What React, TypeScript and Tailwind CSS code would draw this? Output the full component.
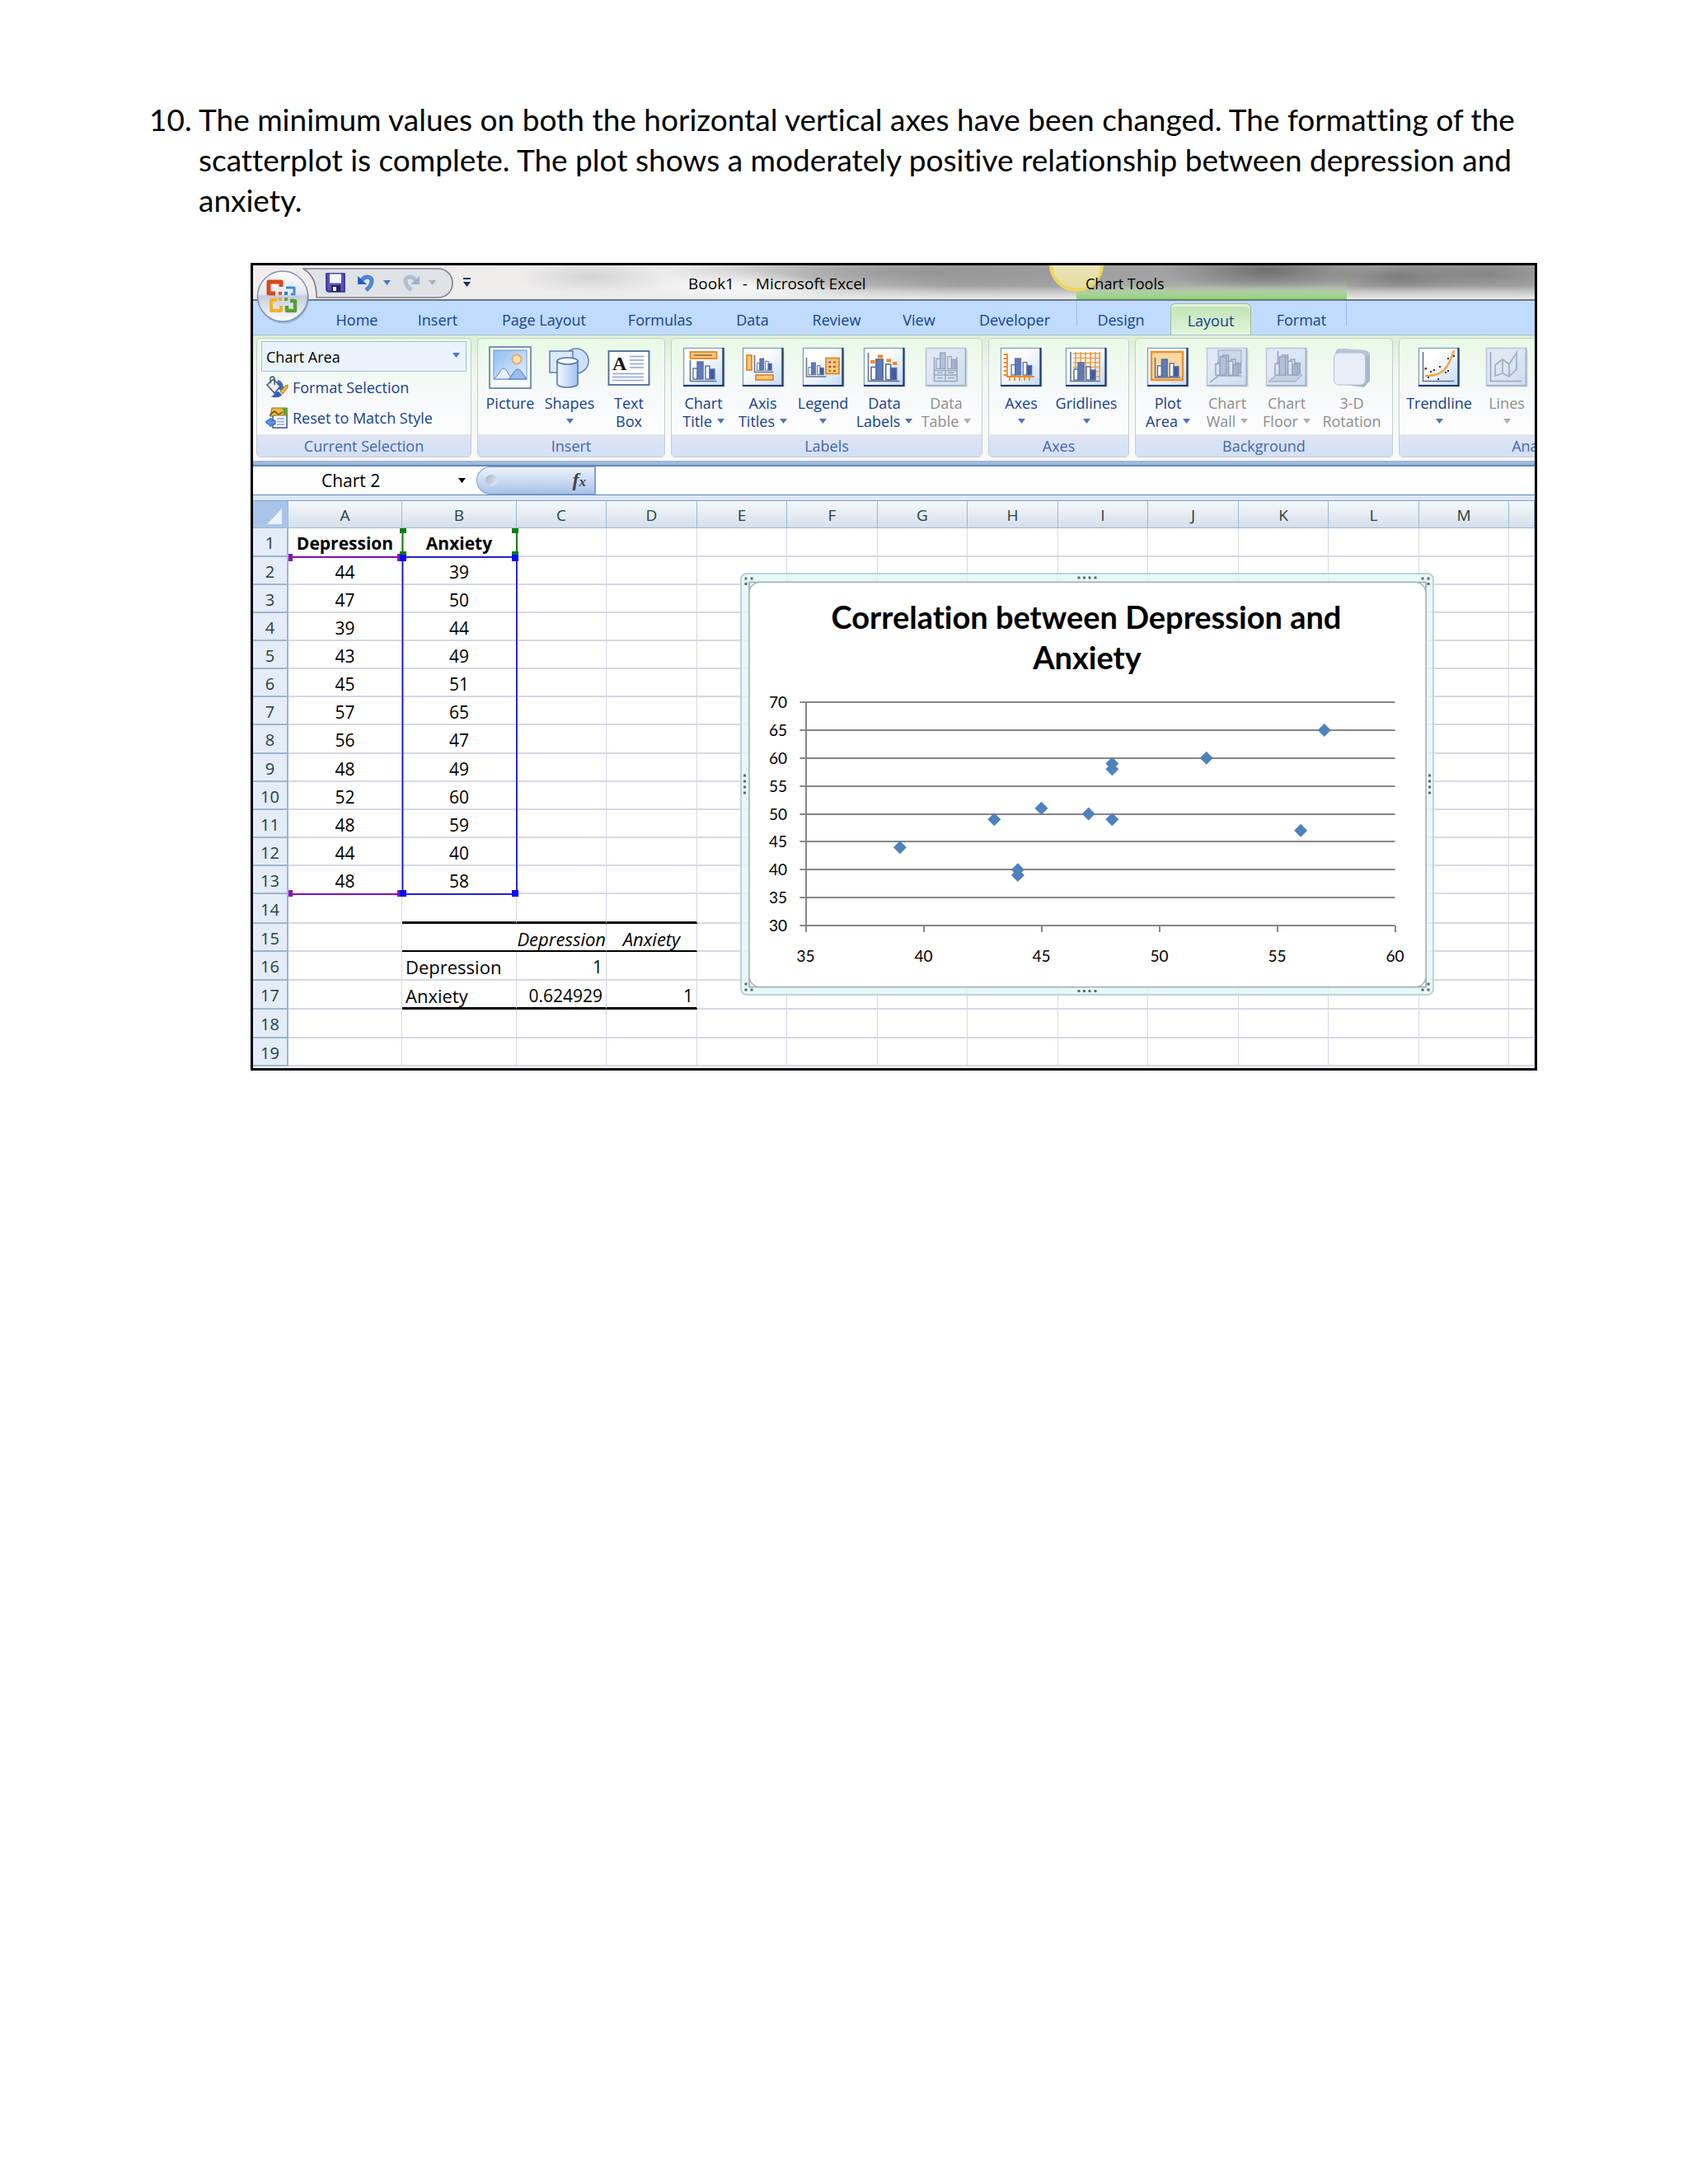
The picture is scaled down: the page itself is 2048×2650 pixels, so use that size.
import React from "react";

const navy = "text-[#15428b]";

/* ---------- icons ---------- */

function Bars({ x = 0, y = 0, s = 1, off = false }: { x?: number; y?: number; s?: number; off?: boolean }) {
  const line = off ? "#97a5bf" : "#5b6f9e";
  const fill = off ? "#b4c0d6" : "#5f7abb";
  const dark = off ? "#a8b5cd" : "#3f5aa3";
  return (
    <g transform={`translate(${x} ${y}) scale(${s})`} stroke={line} strokeWidth="1.4">
      <rect x="0" y="8" width="5" height="13" fill={off ? "#dbe3f0" : "#fff"} />
      <rect x="5" y="0" width="7" height="21" fill={fill} />
      <rect x="15" y="5" width="5" height="16" fill={off ? "#dbe3f0" : "#fff"} />
      <rect x="20" y="9" width="6" height="12" fill={dark} />
    </g>
  );
}

function Tile({ off = false, children }: { off?: boolean; children?: React.ReactNode }) {
  return (
    <svg viewBox="0 0 52 50" className="h-[50px] w-[52px]" aria-hidden="true">
      <defs>
        <linearGradient id={off ? "tileOff" : "tileOn"} x1="0" y1="0" x2="1" y2="1">
          <stop offset="0.35" stopColor={off ? "#dfe8f4" : "#ffffff"} />
          <stop offset="1" stopColor={off ? "#cfdcf0" : "#c3dafa"} />
        </linearGradient>
      </defs>
      <rect x="4" y="4" width="48" height="45" fill="#000" opacity="0.08" />
      <rect x="1.5" y="1.5" width="48" height="45" fill={off ? "url(#tileOff)" : "url(#tileOn)"} stroke={off ? "#b9c6dc" : "#8fa3c4"} strokeWidth="1.5" />
      <path d="M49.5 1v46H1" fill="none" stroke={off ? "#9dadc8" : "#1f3a66"} strokeWidth={off ? 1.6 : 2.2} />
      {children}
    </svg>
  );
}

const orange = { fill: "#fbc77a", stroke: "#e08a2a", strokeWidth: 1.8 };

function Axes({ off = false, d = "M9.5 16v25.500h32" }: { off?: boolean; d?: string }) {
  return <path d={d} fill="none" stroke={off ? "#97a5bf" : "#5f7393"} strokeWidth="1.6" />;
}

const ChartTitleIcon = () => (
  <Tile>
    <rect x="9.500" y="6" width="32" height="8" {...orange} />
    <path d="M14 10h22" stroke="#8a6a3a" strokeWidth="1.4" />
    <Axes />
    <Bars x={13} y={18} />
  </Tile>
);
const AxisTitlesIcon = () => (
  <Tile>
    <rect x="6" y="10" width="6" height="18" {...orange} />
    <rect x="17" y="34" width="21" height="6" {...orange} />
    <Axes d="M15.500 10v20.500h23" />
    <Bars x={18.5} y={14} s={0.68} />
  </Tile>
);
const LegendIcon = () => (
  <Tile>
    <Axes d="M5.500 13v23h24" />
    <Bars x={8} y={19} s={0.7} />
    <rect x="29" y="13.500" width="16" height="19" {...orange} />
    <g strokeWidth="2.200">
      <path d="M32.500 18.500h2.500" stroke="#2b3fae" />
      <path d="M32.500 24h2.500" stroke="#c22" />
      <path d="M32.500 29h2.500" stroke="#6a8a2a" />
      <path d="M38 18.500h3M38 24h3M38 29h3" stroke="#8a6a3a" />
    </g>
  </Tile>
);
const DataLabelsIcon = () => (
  <Tile>
    <Axes d="M6.500 7v34.500h38" />
    <Bars x={10} y={15} s={1.18} />
    <g fill="#f08a24">
      <rect x="9" y="16" width="5.500" height="4" />
      <rect x="18" y="9.500" width="6" height="4" />
      <rect x="28.500" y="14.500" width="5.500" height="4" />
      <rect x="36" y="18" width="5.500" height="4" />
    </g>
  </Tile>
);
const DataTableIcon = () => (
  <Tile off>
    <Axes off d="M11.500 12v29.500h27.500V12" />
    <Bars off x={14} y={7} s={0.92} />
    <path d="M12 28.500h27M12 34h27M25 28.500v13M15 31.300h7M28 31.300h8M15 37.500h7M28 37.500h8" stroke="#97a5bf" strokeWidth="1.400" />
  </Tile>
);
const AxesIcon = () => (
  <Tile>
    <path d="M9 8v28h33M4.500 9H9M4.500 14H9M4.500 19H9M4.500 24H9M4.500 29H9M4.500 34H9M12 36v5M18 36v5M24 36v5M30 36v5M36 36v5" stroke="#ee8a22" strokeWidth="1.800" fill="none" />
    <Bars x={14} y={14} s={0.95} />
  </Tile>
);
const GridlinesIcon = () => (
  <Tile>
    <path d="M10 8h33M10 13.500h33M10 19h33M10 24.500h33M10 30h33M10 36h33M13 6v34M19 6v34M25 6v34M31 6v34M37 6v34M42 6v34" stroke="#f0a04a" strokeWidth="1.700" />
    <Axes d="M7 6v35.500h36" />
    <Bars x={11} y={19} />
  </Tile>
);
const PlotAreaIcon = () => (
  <Tile>
    <rect x="6" y="6" width="38" height="34" fill="#fcd9a4" stroke="#ea9330" strokeWidth="2.500" />
    <Axes d="M10.500 13v24h31" />
    <Bars x={13.500} y={15} s={0.98} />
  </Tile>
);
const ChartWallIcon = () => (
  <Tile off>
    <rect x="15" y="4" width="28" height="20" fill="#ccd7e7" stroke="#97a5bf" />
    <Axes off d="M15 24v11l-10 8M15 35h28" />
    <Bars off x={15} y={10} s={1.05} />
    <Bars off x={12} y={12} s={1.05} />
  </Tile>
);
const ChartFloorIcon = () => (
  <Tile off>
    <Axes off d="M15.500 5v28" />
    <path d="M4 42l9-8h32l-8 8z" fill="#c4cfe1" stroke="#97a5bf" />
    <Bars off x={15} y={10} s={1.05} />
    <Bars off x={12} y={12} s={1.05} />
  </Tile>
);
const RotationIcon = () => (
  <svg viewBox="0 0 52 50" className="h-[50px] w-[52px]" aria-hidden="true">
    <path d="M6 8q1-6 6-6l30 2q5 1 6 6v31l-7 8-30-4z" fill="#a9b6cc" />
    <path d="M6 8q1-6 6-6l30 2q5 1 6 6l-6 1z" fill="#b8c4d8" />
    <rect x="4.500" y="7" width="38" height="39" rx="6" fill="#e9edf7" stroke="#b4c0d6" />
  </svg>
);
const TrendlineIcon = () => (
  <Tile>
    <Axes d="M6.500 6v35.500h38" />
    <path d="M9 35c14 0 22-3 28-14 3-5 5-10 7-17" fill="none" stroke="#f5a63c" strokeWidth="2.600" />
    <g fill="#27305a">
      <rect x="8.500" y="25" width="2.500" height="2.500" fill="#a12" />
      <rect x="15" y="29" width="2" height="2" />
      <rect x="19" y="27" width="2" height="2" />
      <rect x="26" y="23" width="2" height="2" />
      <rect x="12" y="36" width="2" height="2" />
      <rect x="24" y="38" width="2" height="2" />
      <rect x="33" y="30" width="2" height="2" />
      <rect x="36" y="28" width="2" height="2" />
      <rect x="36" y="13" width="2" height="2" />
      <rect x="43" y="10" width="2" height="2" />
    </g>
  </Tile>
);
const LinesIcon = () => (
  <Tile off>
    <Axes off d="M6.500 6v35.500h38" />
    <path d="M12 35V22l9-7 8 6 9-14v20l-9 9-8-4zM21 15v17M29 21v15" fill="none" stroke="#a3b0c8" strokeWidth="1.800" />
  </Tile>
);
const PictureIcon = () => (
  <svg viewBox="0 0 52 52" className="h-[52px] w-[52px]" aria-hidden="true">
    <defs>
      <linearGradient id="sky" x1="0" y1="0" x2="1" y2="1">
        <stop offset="0" stopColor="#8ebdf2" />
        <stop offset="1" stopColor="#e4f3fd" />
      </linearGradient>
    </defs>
    <rect x="1" y="1" width="50" height="50" fill="#f4fafe" stroke="#5f7a9c" strokeWidth="1.600" />
    <rect x="6" y="5" width="40" height="35" fill="url(#sky)" stroke="#6c96cc" />
    <circle cx="34" cy="16" r="5.500" fill="#ffe3b0" stroke="#f2a66a" strokeWidth="2" />
    <path d="M6 40c6-4 8-13 12-13s6 9 11 13z" fill="#e8effc" stroke="#5c7fbe" />
    <path d="M24 40c4-3 7-12 11-12s7 7 11 12z" fill="#9dbcec" stroke="#4f74b6" />
  </svg>
);
const ShapesIcon = () => (
  <svg viewBox="0 0 52 52" className="h-[52px] w-[52px]" aria-hidden="true">
    <defs>
      <linearGradient id="cyl" x1="0" y1="0" x2="1" y2="0">
        <stop offset="0" stopColor="#f2f8ff" />
        <stop offset="1" stopColor="#9fc3f2" />
      </linearGradient>
    </defs>
    <circle cx="34" cy="18" r="15" fill="#cde0f8" stroke="#5f83b4" strokeWidth="1.500" />
    <rect x="2" y="6" width="28" height="26" fill="#d9e8fb" stroke="#5f7fa8" strokeWidth="1.500" />
    <path d="M11 18v28c0 2 5 4 12 4s13-2 13-4V18z" fill="url(#cyl)" stroke="#4f719f" strokeWidth="1.500" />
    <ellipse cx="23.500" cy="18" rx="12.500" ry="4" fill="#f6faff" stroke="#4f719f" strokeWidth="1.500" />
  </svg>
);
const TextBoxIcon = () => (
  <svg viewBox="0 0 52 52" className="h-[52px] w-[52px]" aria-hidden="true">
    <rect x="1.500" y="6" width="49" height="41" fill="#fdfeff" stroke="#4c6a92" strokeWidth="1.800" />
    <text x="6" y="29" fontFamily="Liberation Serif, serif" fontWeight="bold" fontSize="24" fill="#111">A</text>
    <path d="M27 12.500h17M27 17h17M27 21.500h17M27 26h17M6 33.500h38M6 37.500h38M6 41.500h38" stroke="#8fa4d2" strokeWidth="1.700" />
  </svg>
);

function Caret({ className = "text-[#4c77b5]" }: { className?: string }) {
  return (
    <svg viewBox="0 0 9 6" className={`inline-block h-[6px] w-[9px] shrink-0 ${className}`} aria-hidden="true">
      <path d="M0 0h9L4.500 6z" fill="currentColor" />
    </svg>
  );
}

const OfficeOrb = () => (
  <svg viewBox="0 0 66 66" className="h-[66px] w-[66px]" aria-hidden="true">
    <defs>
      <linearGradient id="orb" x1="0" y1="0" x2="0" y2="1">
        <stop offset="0" stopColor="#fbfcfe" />
        <stop offset="0.450" stopColor="#e4e8f0" />
        <stop offset="0.500" stopColor="#c3cede" />
        <stop offset="1" stopColor="#ffffff" />
      </linearGradient>
    </defs>
    <circle cx="34" cy="34.500" r="31" fill="#5b6f94" opacity="0.350" />
    <circle cx="33" cy="32.500" r="30.500" fill="url(#orb)" stroke="#8392ad" strokeWidth="1.500" />
    <g fill="none" strokeLinejoin="round">
      <path d="M31 21v-6H16v14h8" stroke="#d9481c" strokeWidth="5" />
      <path d="M37 22h10v8h-4" stroke="#3b8ede" strokeWidth="3" />
      <path d="M26 37h-7v13h12v-6" stroke="#f6b021" strokeWidth="4" />
      <path d="M38 44v6h10V38h-6" stroke="#5c9e31" strokeWidth="4.500" />
    </g>
    <rect x="28" y="27" width="4" height="4" fill="#e2541c" />
    <rect x="35" y="27" width="4" height="4" fill="#2f7fd6" />
    <rect x="28" y="34" width="4" height="4" fill="#f3a81c" />
    <rect x="35" y="34" width="4" height="4" fill="#6aa836" />
  </svg>
);

const SaveIcon = () => (
  <svg viewBox="0 0 24 24" className="h-6 w-6" aria-hidden="true">
    <path d="M1 1h22v22H3l-2-2z" fill="#5a50c0" stroke="#2e2a8a" strokeWidth="1.600" />
    <rect x="5" y="1.500" width="14" height="11" fill="#f4f7ff" />
    <rect x="7" y="15" width="11" height="8" fill="#23264f" />
    <rect x="9" y="17" width="4" height="5" fill="#e3e8f4" />
  </svg>
);
const UndoIcon = ({ redo = false }: { redo?: boolean }) => (
  <svg viewBox="0 0 22 22" className="h-[22px] w-[22px]" aria-hidden="true">
    <g transform={redo ? "translate(22 0) scale(-1 1)" : undefined}>
      <path d="M6 8C9 3 18 2 18 9c0 5-3 8-7 11" fill="none" stroke={redo ? "#b4bfce" : "#4f84d8"} strokeWidth="5" />
      <path d="M1 3v10h11z" fill={redo ? "#a3b0c4" : "#2c5cb8"} />
    </g>
  </svg>
);
const FormatIcon = () => (
  <svg viewBox="0 0 28 28" className="h-7 w-7" aria-hidden="true">
    <path d="M15 5c5 1 8 6 7 14-5 0-8-6-8-9z" fill="#3d6ec4" />
    <path d="M2 11l8-7 8 9-7 8z" fill="#eef3fa" stroke="#44566e" strokeWidth="1.500" />
    <path d="M6 9V4c0-4 5-4 5 0v7" fill="none" stroke="#44566e" strokeWidth="1.500" />
    <path d="M6 25c6 0 4-6 10-6l4 4c-3 4-8 4-14 2z" fill="#2f60bd" />
    <path d="M18 19l6-7 3-1v3l-6 8z" fill="#f0b83a" stroke="#a87a1a" />
  </svg>
);
const ResetIcon = () => (
  <svg viewBox="0 0 28 28" className="h-7 w-7" aria-hidden="true">
    <rect x="9" y="8" width="17" height="18" fill="#f7faff" stroke="#3d5580" strokeWidth="1.500" />
    <path d="M14 15h9M14 18.500h9M14 22h9" stroke="#8fa4d2" strokeWidth="1.500" />
    <path d="M8 2h18v9H14l-8 1z" fill="#e9b93c" stroke="#8d7424" strokeWidth="1.200" />
    <path d="M21 2h6v8h-5z" fill="#66a13c" />
    <path d="M5 11l6-5 5 4 5-3" fill="none" stroke="#5c4a1c" strokeWidth="1.400" />
    <path d="M0 19l7-5v3h5v5H7v3z" fill="#5f95e8" stroke="#2d5cae" />
  </svg>
);

/* ---------- ribbon ---------- */

type Tool = { lines: [string, string?]; icon: React.ReactNode; w: string; caret?: boolean; off?: boolean };

const insertTools: Tool[] = [
  { lines: ["Picture"], icon: <PictureIcon />, w: "w-[72px]" },
  { lines: ["Shapes"], icon: <ShapesIcon />, w: "w-[72px]", caret: true },
  { lines: ["Text", "Box"], icon: <TextBoxIcon />, w: "w-[72px]" },
];
const labelTools: Tool[] = [
  { lines: ["Chart", "Title"], icon: <ChartTitleIcon />, w: "w-[71px]", caret: true },
  { lines: ["Axis", "Titles"], icon: <AxisTitlesIcon />, w: "w-[73px]", caret: true },
  { lines: ["Legend"], icon: <LegendIcon />, w: "w-[73px]", caret: true },
  { lines: ["Data", "Labels"], icon: <DataLabelsIcon />, w: "w-[76px]", caret: true },
  { lines: ["Data", "Table"], icon: <DataTableIcon />, w: "w-[74px]", caret: true, off: true },
];
const axesTools: Tool[] = [
  { lines: ["Axes"], icon: <AxesIcon />, w: "w-[72px]", caret: true },
  { lines: ["Gridlines"], icon: <GridlinesIcon />, w: "w-[86px]", caret: true },
];
const backgroundTools: Tool[] = [
  { lines: ["Plot", "Area"], icon: <PlotAreaIcon />, w: "w-[72px]", caret: true },
  { lines: ["Chart", "Wall"], icon: <ChartWallIcon />, w: "w-[72px]", caret: true, off: true },
  { lines: ["Chart", "Floor"], icon: <ChartFloorIcon />, w: "w-[72px]", caret: true, off: true },
  { lines: ["3-D", "Rotation"], icon: <RotationIcon />, w: "w-[86px]", off: true },
];
const analysisTools: Tool[] = [
  { lines: ["Trendline"], icon: <TrendlineIcon />, w: "w-[90px]", caret: true },
  { lines: ["Lines"], icon: <LinesIcon />, w: "w-[74px]", caret: true, off: true },
];

function ToolButton({ tool }: { tool: Tool }) {
  const [a, b] = tool.lines;
  return (
    <button
      type="button"
      disabled={tool.off}
      className={`flex shrink-0 flex-col items-center pt-[3px] ${tool.w} ${tool.off ? "text-[#8d8d8d]" : navy}`}
    >
      <span className="flex h-[64px] items-center">{tool.icon}</span>
      <span className="whitespace-nowrap">{a}</span>
      <span className="flex h-[22px] items-center gap-[6px] whitespace-nowrap">
        {b}
        {tool.caret && <Caret className={tool.off ? "text-[#b0b0b0]" : "text-[#4c77b5]"} />}
      </span>
    </button>
  );
}

function Group({ title, width, children }: { title: string; width: string; children: React.ReactNode }) {
  return (
    <section
      aria-label={title}
      className={`flex h-[145px] shrink-0 flex-col overflow-hidden rounded-[5px] border border-[#c5ccd3] bg-linear-to-b from-[#e8fae6] via-[#f8f9fb] via-50% to-white ${width}`}
    >
      <div className="flex flex-1 pl-[3px]">{children}</div>
      <h2 className="h-[27px] bg-linear-to-b from-[#dfe5f1] to-[#d2e0f5] text-center leading-[28px] text-[#4468ab]">{title}</h2>
    </section>
  );
}

const tabs: { label: string; w: string }[] = [
  { label: "Home", w: "w-[94px]" },
  { label: "Insert", w: "w-[102px]" },
  { label: "Page Layout", w: "w-[156px]" },
  { label: "Formulas", w: "w-[126px]" },
  { label: "Data", w: "w-[98px]" },
  { label: "Review", w: "w-[106px]" },
  { label: "View", w: "w-[94px]" },
  { label: "Developer", w: "w-[138px]" },
  { label: "Design", w: "w-[120px]" },
  { label: "Layout", w: "w-[98px]" },
  { label: "Format", w: "w-[122px]" },
];

function TitleBar() {
  return (
    <div className="relative flex h-[43px] items-center overflow-hidden border-b-2 border-[#6f7680] bg-linear-to-r from-[#f3ecec] via-[#ececec] via-38% to-[#a6a6a6] to-55%">
      <div className="absolute inset-0 bg-[radial-gradient(90px_22px_at_410px_14px,#d4d4d4,transparent),radial-gradient(120px_30px_at_590px_36px,#ffffff,transparent),radial-gradient(330px_26px_at_830px_8px,#959595,transparent),radial-gradient(130px_26px_at_1230px_6px,#6f6f6f,transparent),radial-gradient(90px_20px_at_1390px_14px,#7c7c7c,transparent),radial-gradient(120px_22px_at_1490px_10px,#858585,transparent)]" />
      <div className="absolute inset-0 bg-linear-to-b from-transparent from-60% to-[#ececec]" />
      <div className="absolute bottom-0 left-[999px] h-[22px] w-[328px] bg-linear-to-b from-transparent via-[#a9cf9b]/50 to-[#86d46c]" />
      <div className="absolute -top-[34px] left-[966px] h-[66px] w-[66px] rounded-full border-4 border-[#ecd75e] bg-linear-to-b from-[#f5f0d0] to-[#e3dba0]" />
      <svg viewBox="0 0 190 38" className="absolute left-[60px] top-[3px] h-[38px] w-[190px]" aria-hidden="true">
        <path d="M1 1h163c24 0 24 35 0 35H17C17 18 12 8 1 1z" fill="#dfe2e6" stroke="#7d8087" strokeWidth="1.600" />
      </svg>
      <div className="relative flex w-full items-center pl-[88px]">
        <button type="button" aria-label="Save"><SaveIcon /></button>
        <button type="button" aria-label="Undo" className="ml-[14px] flex items-center gap-[10px]"><UndoIcon /><Caret /></button>
        <button type="button" aria-label="Redo" className="ml-[14px] flex items-center gap-[10px]"><UndoIcon redo /><Caret className="text-[#a9adb5]" /></button>
        <button type="button" aria-label="Customize Quick Access Toolbar" className="ml-[33px] flex flex-col items-center gap-[3px]">
          <span className="block h-[2px] w-[9px] bg-[#15306b]" />
          <Caret className="text-[#15306b]" />
        </button>
        <h1 className="ml-[264px] w-[482px] whitespace-nowrap pt-[3px] text-[19px] text-black">Book1&nbsp; - &nbsp;Microsoft Excel</h1>
        <span className="whitespace-nowrap pt-[3px] text-black">Chart Tools</span>
      </div>
    </div>
  );
}

function Ribbon() {
  return (
    <div className="relative font-['Open_Sans',sans-serif] text-[18px] leading-[22px]">
      <TitleBar />
      <div className="absolute left-[3px] top-[5px] z-10">
        <button type="button" aria-label="Office Button"><OfficeOrb /></button>
      </div>
      <nav className="relative flex h-[41px] items-end bg-[#bfdbff] pl-[79px]">
        <div className="absolute left-[999px] top-0 h-[30px] w-[328px] border-x border-[#9fb9dc]" />
        {tabs.map((t) => (
          <button
            key={t.label}
            type="button"
            className={`relative h-[38px] shrink-0 pt-[2px] text-center ${navy} ${t.w} ${
              t.label === "Layout"
                ? "rounded-t-[6px] border border-b-0 border-[#9cc09a] bg-linear-to-b from-[#bfe3b4] to-[#e2f5dc] shadow-[inset_0_3px_0_#e3f5dc]"
                : ""
            }`}
          >
            {t.label}
          </button>
        ))}
      </nav>
      <div className="flex h-[153px] gap-[7px] border-t border-[#a9bfd0] bg-linear-to-b from-[#daf0d4] via-[#f0f7f0] via-30% to-[#fafafa] pl-1 pt-[3px]">
        <Group title="Current Selection" width="w-[261px]">
          <div className="flex flex-1 flex-col items-start pl-[2px] pr-[5px] pt-[3px]">
            <div className="relative w-full">
              <select aria-label="Chart Elements" className="h-[37px] w-full appearance-none border border-[#a5bcd8] bg-[#e9f3fc] pl-[5px] text-black">
                <option>Chart Area</option>
              </select>
              <span className="pointer-events-none absolute right-[8px] top-[4px]"><Caret /></span>
            </div>
            <button type="button" className={`mt-1 flex h-[30px] items-center gap-[5px] whitespace-nowrap pl-[5px] ${navy}`}>
              <FormatIcon />Format Selection
            </button>
            <button type="button" className={`mt-[7px] flex h-[30px] items-center gap-[5px] whitespace-nowrap pl-[5px] ${navy}`}>
              <ResetIcon />Reset to Match Style
            </button>
          </div>
        </Group>
        <Group title="Insert" width="w-[228px]">{insertTools.map((t, i) => <ToolButton key={i} tool={t} />)}</Group>
        <Group title="Labels" width="w-[378px]">{labelTools.map((t, i) => <ToolButton key={i} tool={t} />)}</Group>
        <Group title="Axes" width="w-[171px]">{axesTools.map((t, i) => <ToolButton key={i} tool={t} />)}</Group>
        <Group title="Background" width="w-[313px]">{backgroundTools.map((t, i) => <ToolButton key={i} tool={t} />)}</Group>
        <Group title="Analysis" width="w-[342px]">{analysisTools.map((t, i) => <ToolButton key={i} tool={t} />)}</Group>
      </div>
      <div className="h-[7px] border-b-2 border-[#5f88bb] bg-[#9fb9da]" />
    </div>
  );
}

function FormulaBar() {
  return (
    <div className="flex h-[35px] border-b border-[#5f88bb] bg-white font-['Open_Sans',sans-serif] text-[21px]">
      <div className="flex w-[271px] items-center">
        <input aria-label="Name Box" defaultValue="Chart 2" className="w-[249px] bg-transparent pl-[83px] pt-[2px] outline-none" />
        <Caret className="text-black" />
      </div>
      <div className="flex w-[145px] items-center justify-between rounded-l-full border border-r-2 border-[#7f9fcb] bg-linear-to-b from-[#edf3fc] to-[#a9c2e8] px-[10px]">
        <span className="h-[14px] w-[14px] rounded-full bg-linear-to-br from-[#a8adc0] to-[#eef1f8]" />
        <button type="button" aria-label="Insert Function" className="font-['Liberation_Serif',serif] text-[24px] font-bold italic leading-[28px] text-[#444]">
          f<span className="text-[17px]">x</span>
        </button>
      </div>
      <input aria-label="Formula" className="min-w-0 flex-1 bg-transparent px-2 outline-none" />
    </div>
  );
}

/* ---------- worksheet ---------- */

const columns: { name: string; w: string }[] = [
  { name: "A", w: "w-[138px]" },
  { name: "B", w: "w-[139px]" },
  { name: "C", w: "w-[109px]" },
  { name: "D", w: "w-[110px]" },
  { name: "E", w: "w-[109px]" },
  { name: "F", w: "w-[110px]" },
  { name: "G", w: "w-[109px]" },
  { name: "H", w: "w-[110px]" },
  { name: "I", w: "w-[109px]" },
  { name: "J", w: "w-[110px]" },
  { name: "K", w: "w-[109px]" },
  { name: "L", w: "w-[110px]" },
  { name: "M", w: "w-[109px]" },
  { name: "", w: "" },
];

const pairs: [number, number][] = [
  [44, 39], [47, 50], [39, 44], [43, 49], [45, 51], [57, 65],
  [56, 47], [48, 49], [52, 60], [48, 59], [44, 40], [48, 58],
];

const cells: Record<string, { text: string; cls: string }> = {
  A1: { text: "Depression", cls: "text-center font-bold" },
  B1: { text: "Anxiety", cls: "text-center font-bold" },
  C15: { text: "Depression", cls: "text-right italic text-[22px]" },
  D15: { text: "Anxiety", cls: "text-center italic text-[22px]" },
  B16: { text: "Depression", cls: "pl-1 text-left text-[22px]" },
  C16: { text: "1", cls: "pr-1 text-right" },
  B17: { text: "Anxiety", cls: "pl-1 text-left text-[22px]" },
  C17: { text: "0.624929", cls: "pr-1 text-right" },
  D17: { text: "1", cls: "pr-1 text-right" },
};
pairs.forEach(([d, a], i) => {
  cells[`A${i + 2}`] = { text: String(d), cls: "text-center" };
  cells[`B${i + 2}`] = { text: String(a), cls: "text-center" };
});

const rowHeights: Record<number, string> = { 1: "h-[35px]", 8: "h-[35px]", 14: "h-[36px]", 16: "h-[35px]", 17: "h-[35px]", 18: "h-[35px]" };

function cellBorder(col: string, row: number) {
  if (col && "BCD".includes(col)) {
    if (row === 14 || row === 17) return "border-r border-b-3 border-r-[#d0d4e4] border-b-black";
    if (row === 15) return `${col === "B" ? "border-r-0" : "border-r"} border-b-2 border-r-[#d0d4e4] border-b-black`;
  }
  return "border-r border-b-2 border-[#d6d8e6]";
}

function Sheet() {
  return (
    <table className="w-full table-fixed border-separate border-spacing-0 font-['Open_Sans',sans-serif] text-[21px] leading-[28px]">
      <colgroup>
        <col className="w-[43px]" />
        {columns.map((c) => <col key={c.name} className={c.w} />)}
      </colgroup>
      <thead>
        <tr className="h-[33px]">
          <th aria-label="Select all" className="border-b border-r border-[#9eb6ce] bg-[#a9c4e9] p-0">
            <svg viewBox="0 0 42 30" className="h-[30px] w-[42px]" aria-hidden="true">
              <path d="M35 8v19H17z" fill="#eef3fb" />
            </svg>
          </th>
          {columns.map((c) => (
            <th key={c.name} scope="col" className="border-b border-r border-[#9eb6ce] bg-linear-to-b from-[#f6f9fc] to-[#d5dfeb] px-0 pb-0 pt-[2px] text-[19px] font-normal text-[#27413e]">
              {c.name}
            </th>
          ))}
        </tr>
      </thead>
      <tbody>
        {Array.from({ length: 19 }, (_, i) => i + 1).map((row) => (
          <tr key={row} className={rowHeights[row] ?? "h-[34px]"}>
            <th scope="row" className="border-b-2 border-r-2 border-[#9eb6ce] bg-[#e4ecf7] px-0 pb-0 pt-[3px] text-[20px] font-normal text-[#27413e]">{row}</th>
            {columns.map((c) => {
              const cell = cells[`${c.name}${row}`];
              return (
                <td key={c.name} className={`whitespace-nowrap pb-0 pt-[3px] ${cellBorder(c.name, row)} ${cell?.cls ?? ""}`}>
                  {cell?.text}
                </td>
              );
            })}
          </tr>
        ))}
      </tbody>
    </table>
  );
}

/* Coloured outlines that mark the series name, X values and Y values. */
function RangeMarkers() {
  return (
    <svg viewBox="0 0 290 452" className="pointer-events-none absolute left-[42px] top-[33px] h-[452px] w-[290px]" aria-hidden="true">
      <path d="M139.500 0v35M278 0v35" stroke="#0b7d12" strokeWidth="2" />
      <path d="M1 35h138M1 444h138" stroke="#8d12b8" strokeWidth="2" />
      <g fill="#8d12b8">
        <rect x="1" y="31" width="5" height="9" /><rect x="133" y="31" width="6" height="9" />
        <rect x="1" y="439" width="5" height="8" /><rect x="133" y="439" width="6" height="8" />
      </g>
      <rect x="139.500" y="35" width="138.500" height="409" fill="none" stroke="#1414c8" strokeWidth="1.800" />
      <g fill="#0b7d12">
        <rect x="136" y="0" width="8" height="6" /><rect x="272" y="0" width="8" height="6" />
        <rect x="136" y="28" width="8" height="4" /><rect x="272" y="28" width="8" height="4" />
      </g>
      <g fill="#0a0aff">
        <rect x="136" y="32" width="8" height="8" /><rect x="272" y="32" width="8" height="8" />
        <rect x="136" y="439" width="8" height="8" /><rect x="272" y="439" width="8" height="8" />
      </g>
    </svg>
  );
}

const X0 = 79.5;
const X1 = 794.5;
const Y0 = 428;
const Y1 = 157;
const px = (v: number) => X0 + ((v - 35) / 25) * (X1 - X0);
const py = (v: number) => Y0 - ((v - 30) / 40) * (Y0 - Y1);

function Dots({ points }: { points: [number, number][] }) {
  return <g fill="#5b6b6e">{points.map(([x, y]) => <rect key={`${x}-${y}`} x={x - 1.5} y={y - 1.5} width="3" height="3" />)}</g>;
}

function ScatterChart() {
  return (
    <svg viewBox="0 0 842 513" role="img" aria-label="Scatterplot of depression and anxiety" className="absolute left-[591px] top-[87px] h-[513px] w-[842px]">
      <rect x="1" y="1" width="840" height="511" rx="7" fill="#e0f8f6" fillOpacity="0.800" stroke="#bfd2d2" strokeWidth="2" />
      <rect x="11" y="11.500" width="821" height="491" fill="#f1fbfa" stroke="#a3b0b2" strokeWidth="1.800" />
      <rect x="11" y="11.500" width="821" height="491" rx="13" fill="#fff" stroke="#a9b6b8" strokeWidth="1.500" />
      <Dots points={[
        [7, 7], [14, 7], [7, 13.5], [828, 7], [835, 7], [835, 13.5],
        [7, 499], [7, 506], [14, 506], [835, 499], [828, 506], [835, 506],
        [411, 6], [417.5, 6], [424, 6], [431, 6], [411, 507.5], [417.5, 507.5], [424, 507.5], [431, 507.5],
        [5.5, 246], [5.5, 253], [5.5, 260], [5.5, 267], [836.5, 246], [836.5, 253], [836.5, 260], [836.5, 267],
      ]} />
      <g fontFamily="Lato, sans-serif" fontWeight="bold" fontSize="38" textAnchor="middle" fill="#000" className="[font-variant-ligatures:none]">
        <text x="420" y="68">Correlation between Depression and</text>
        <text x="421" y="117">Anxiety</text>
      </g>
      <g stroke="#868686" strokeWidth="2">
        {[30, 35, 40, 45, 50, 55, 60, 65, 70].map((v) => <path key={v} d={`M${X0 - 7} ${Math.round(py(v))}H${X1}`} />)}
        {[35, 40, 45, 50, 55, 60].map((v) => <path key={v} d={`M${Math.round(px(v))} ${Y0}v8`} />)}
        <path d={`M80 ${Y1}V${Y0}`} />
      </g>
      <g fontFamily="Lato, sans-serif" fontSize="19" fill="#000">
        {[30, 35, 40, 45, 50, 55, 60, 65, 70].map((v) => <text key={v} x="57" y={Math.round(py(v)) + 7} textAnchor="end">{v}</text>)}
        {[35, 40, 45, 50, 55, 60].map((v) => <text key={v} x={px(v)} y="472" textAnchor="middle">{v}</text>)}
      </g>
      <g fill="#4f81bd">
        {pairs.map(([d, a], i) => <path key={i} d={`M${px(d)} ${py(a) - 8}l8 8-8 8-8-8z`} />)}
      </g>
    </svg>
  );
}

export default function App() {
  return (
    <main className="bg-white pb-16 pl-[181px] pr-[183px] pt-[120px] text-black">
      <ol start={10} className="font-['Lato',sans-serif] text-[37px] leading-[49px] [font-variant-ligatures:none]">
        <li className="flex">
          <span className="w-[60px] shrink-0">10.</span>
          <p className="whitespace-nowrap">
            The minimum values on both the horizontal vertical axes have been changed. The formatting of the
            <br />
            scatterplot is complete. The plot shows a moderately positive relationship between depression and
            <br />
            anxiety.
          </p>
        </li>
      </ol>
      <div className="ml-[123px] mt-[52px] overflow-hidden border-[3px] border-black bg-white">
        <Ribbon />
        <FormulaBar />
        <div className="h-[7px] border-b border-[#7f9fcb] bg-[#dce8f8]" />
        <div className="relative overflow-hidden pb-[2px]">
          <Sheet />
          <RangeMarkers />
          <ScatterChart />
        </div>
      </div>
    </main>
  );
}
